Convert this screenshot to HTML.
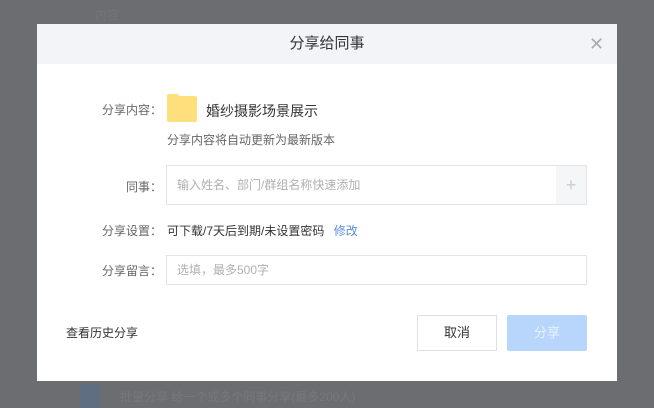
<!DOCTYPE html><html><head><meta charset="utf-8"><style>
body{margin:0;width:654px;height:408px;background:#6c6d71;position:relative;overflow:hidden;font-family:"Liberation Sans","Noto Sans CJK SC",sans-serif;}
.a{position:absolute}
.dlg{left:37px;top:24px;width:580px;height:357px;background:#fff;}
.hd{left:0;top:0;width:580px;height:40px;background:#f3f4f8;text-align:center;line-height:40px;font-size:15px;color:#333}
.lb{font-size:12px;color:#666;text-align:right;width:125px;left:0}
.in{border:1px solid #e3e4e8;background:#fff;box-sizing:border-box;font-size:12px;color:#b0b0b0;padding-left:10px}
</style></head><body>
<div class="a" style="left:95px;top:6px;font-size:12px;color:#737478">内容</div>
<div class="a" style="left:80px;top:384px;width:20px;height:24px;background:#5f6e82"></div>
<div class="a" style="left:120px;top:388px;font-size:12px;color:#77787c">批量分享 给一个或多个同事分享(最多200人)</div>
<div class="a dlg">
<div class="a hd">分享给同事</div>
<div class="a" style="left:552px;top:10px;font-size:18px;color:#aaa;font-weight:300">✕</div>
<div class="a lb" style="top:77px">分享内容：</div>
<div class="a" style="left:130px;top:72px;width:30px;height:26px;background:#fddf7c;border-radius:2px"></div>
<div class="a" style="left:130px;top:70px;width:12px;height:4px;background:#fddf7c;border-radius:2px 2px 0 0"></div>
<div class="a" style="left:169px;top:77px;font-size:14px;color:#333">婚纱摄影场景展示</div>
<div class="a" style="left:130px;top:107px;font-size:12px;color:#666">分享内容将自动更新为最新版本</div>
<div class="a lb" style="top:154px">同事：</div>
<div class="a in" style="left:129px;top:141px;width:421px;height:40px;line-height:38px">输入姓名、部门/群组名称快速添加</div>
<div class="a" style="left:519px;top:142px;width:30px;height:38px;background:#f5f6f8;text-align:center;line-height:38px;color:#ccc;font-size:18px">+</div>
<div class="a lb" style="top:198px">分享设置：</div>
<div class="a" style="left:130px;top:198px;font-size:12px;color:#333">可下载/7天后到期/未设置密码 <span style="color:#5a8de0;margin-left:6px">修改</span></div>
<div class="a lb" style="top:238px">分享留言：</div>
<div class="a in" style="left:129px;top:231px;width:421px;height:30px;line-height:28px">选填，最多500字</div>
<div class="a" style="left:29px;top:300px;font-size:12px;color:#333">查看历史分享</div>
<div class="a" style="left:380px;top:291px;width:80px;height:36px;border:1px solid #e0e0e0;box-sizing:border-box;text-align:center;line-height:34px;font-size:13px;color:#333">取消</div>
<div class="a" style="left:470px;top:291px;width:80px;height:36px;background:#b8d6fb;border-radius:2px;text-align:center;line-height:36px;font-size:13px;color:#e6f0fe">分享</div>
</div>
</body></html>
